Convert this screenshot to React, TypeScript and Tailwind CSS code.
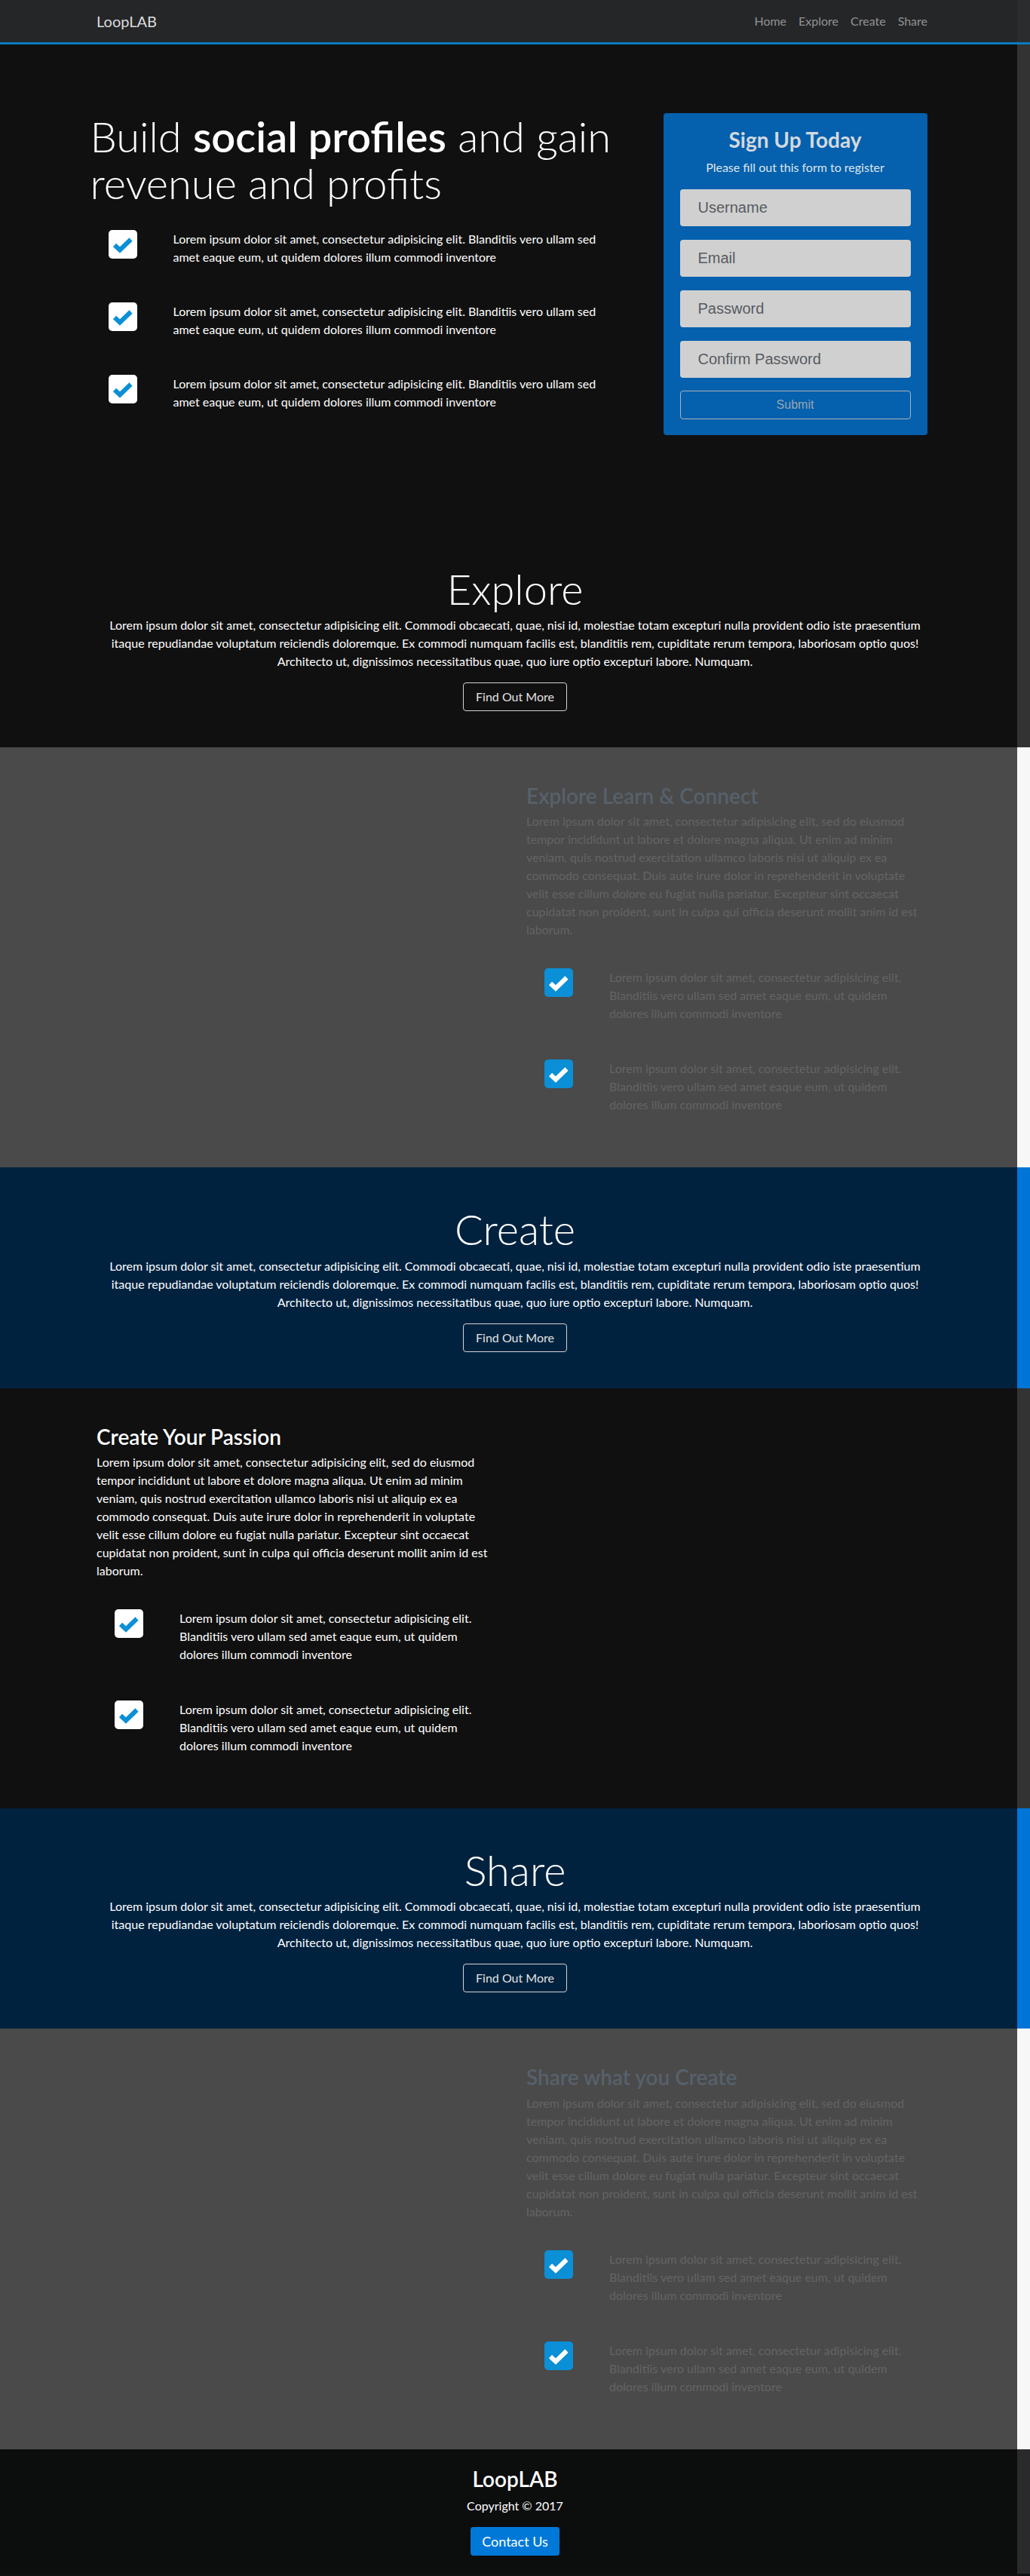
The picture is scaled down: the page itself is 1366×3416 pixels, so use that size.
import React from 'react';

const lorem =
  'Lorem ipsum dolor sit amet, consectetur adipisicing elit, sed do eiusmod tempor incididunt ut labore et dolore magna aliqua. Ut enim ad minim veniam, quis nostrud exercitation ullamco laboris nisi ut aliquip ex ea commodo consequat. Duis aute irure dolor in reprehenderit in voluptate velit esse cillum dolore eu fugiat nulla pariatur. Excepteur sint occaecat cupidatat non proident, sunt in culpa qui officia deserunt mollit anim id est laborum.';

const shortLorem =
  'Lorem ipsum dolor sit amet, consectetur adipisicing elit. Blanditiis vero ullam sed amet eaque eum, ut quidem dolores illum commodi inventore';

const CheckBox = ({ inverted = false }: { inverted?: boolean }) => (
  <svg width="38" height="38" viewBox="0 0 38 38" className="shrink-0">
    <rect width="38" height="38" rx="5" fill={inverted ? '#0b8fd6' : '#ffffff'} />
    <path
      d="M8 20 L15 26.5 L29.5 12.5"
      fill="none"
      stroke={inverted ? '#ffffff' : '#0b8fd6'}
      strokeWidth="6"
    />
  </svg>
);

const Banner = ({ title, className }: { title: string; className: string }) => (
  <section className={className}>
    <div className="ml-[113px] w-[1140px] px-[15px] pt-12 pb-12 text-center">
      <h1 className="text-[56px] font-light leading-[1.2] text-white mb-[3px]">{title}</h1>
      <p className="text-base leading-6 text-white">
        Lorem ipsum dolor sit amet, consectetur adipisicing elit. Commodi obcaecati, quae, nisi id, molestiae totam excepturi nulla provident odio iste praesentium
        <br />
        itaque repudiandae voluptatum reiciendis doloremque. Ex commodi numquam facilis est, blanditiis rem, cupiditate rerum tempora, laboriosam optio quos!
        <br />
        Architecto ut, dignissimos necessitatibus quae, quo iure optio excepturi labore. Numquam.
      </p>
      <button className="mt-4 h-[38px] px-4 rounded border border-[#d4d4d4] text-[#e2e2e2] text-base">
        Find Out More
      </button>
    </div>
  </section>
);

const Feature = ({
  title,
  right = false,
  className,
}: {
  title: string;
  right?: boolean;
  className: string;
}) => (
  <section className={className}>
    <div className="ml-[113px] w-[1140px] px-[15px] pt-[48px] pb-[71px]">
      <div className={right ? 'ml-[570px] w-[532px]' : 'w-[532px]'}>
        <h3
          className={
            right
              ? 'text-[28px] font-semibold leading-[1.2] mb-[5px] text-[#57616b]'
              : 'text-[28px] font-semibold leading-[1.2] mb-[5px] text-white'
          }
        >
          {title}
        </h3>
        <p className={right ? 'text-base leading-6 text-[#646464]' : 'text-base leading-6 text-white'}>{lorem}</p>
        <div className="mt-[39px] flex flex-col gap-[49px]">
          {[0, 1].map(i => (
            <div key={i} className="flex items-start">
              <div className="w-[110px] pl-6">
                <CheckBox inverted={right} />
              </div>
              <p className={right ? 'w-[420px] text-base leading-6 text-[#646464]' : 'w-[420px] text-base leading-6 text-white'}>
                {shortLorem}
              </p>
            </div>
          ))}
        </div>
      </div>
    </div>
  </section>
);

const App: React.FC = () => {
  return (
    <div className="min-h-screen bg-[#101010] font-['Lato','Open_Sans',sans-serif] antialiased">
      {/* Navbar */}
      <nav className="h-14 bg-[#252628] border-r-[17px] border-r-[#2b2c2e]">
        <div className="ml-[113px] w-[1140px] px-[15px] h-full flex items-center justify-between">
          <a className="text-xl text-[#dcdcdc]">LoopLAB</a>
          <ul className="flex text-base text-[#929393]">
            {['Home', 'Explore', 'Create', 'Share'].map(item => (
              <li key={item} className="px-2">{item}</li>
            ))}
          </ul>
        </div>
      </nav>
      <div className="h-[3px] bg-[#0a7bc0]" />

      {/* Hero */}
      <section className="bg-[#101010] border-r-[17px] border-r-[#333333]">
        <div className="mx-auto w-[1140px] px-[15px] pt-[91px] pb-[122px] flex items-start gap-[30px]">
          <div className="w-[730px]">
            <h1 className="text-[56px] font-light leading-[62px] text-white">
              Build <strong className="font-semibold">social profiles</strong> and gain revenue and profits
            </h1>
            <div className="mt-[31px] flex flex-col gap-12">
              {[0, 1, 2].map(i => (
                <div key={i} className="flex items-start">
                  <div className="w-[110px] pl-6">
                    <CheckBox />
                  </div>
                  <p className="w-[585px] text-base leading-6 text-white">{shortLorem}</p>
                </div>
              ))}
            </div>
          </div>

          <div className="w-[350px] bg-[#0560ad] rounded px-[22px] pt-[19px] pb-[21px] text-center">
            <h2 className="text-[28px] font-bold leading-[1.2] text-[#d3d9df]">Sign Up Today</h2>
            <p className="mt-[7px] text-base leading-6 text-[#dfe5ea]">Please fill out this form to register</p>
            <form className="mt-[17px] flex flex-col gap-[18px] font-['Liberation_Sans',Arial,sans-serif]">
              {['Username', 'Email', 'Password', 'Confirm Password'].map(ph => (
                <input
                  key={ph}
                  placeholder={ph}
                  className="h-[49px] w-full rounded bg-[#d0d0d0] px-6 text-xl text-[#333] placeholder:text-[#575b60] outline-none"
                />
              ))}
              <button
                type="button"
                className="mt-[-1px] h-[38px] w-full rounded border border-[#a9b3bd] text-base text-[#9ba6b1]"
              >
                Submit
              </button>
            </form>
          </div>
        </div>
      </section>

      <Banner title="Explore" className="bg-[#101010] border-r-[17px] border-r-[#333333]" />

      <Feature title="Explore Learn & Connect" right className="bg-[#4a4a4a] border-r-[17px] border-r-[#f7f7f7]" />

      <Banner title="Create" className="bg-[#00223f] border-r-[17px] border-r-[#0075d8]" />

      <Feature title="Create Your Passion" className="bg-[#101010] border-r-[17px] border-r-[#333333]" />

      <Banner title="Share" className="bg-[#00223f] border-r-[17px] border-r-[#0075d8]" />

      <Feature title="Share what you Create" right className="bg-[#4a4a4a] border-r-[17px] border-r-[#f7f7f7]" />

      {/* Footer */}
      <footer className="bg-[#0c0d0d] border-r-[17px] border-r-[#2a2a2c]">
        <div className="ml-[113px] w-[1140px] pt-[23px] pb-6 text-center">
          <h3 className="text-[28px] font-semibold leading-[1.2] text-white">LoopLAB</h3>
          <p className="mt-1.5 text-base leading-6 text-white">Copyright &copy; 2017</p>
          <button className="mt-4 h-[38px] px-[15px] rounded bg-[#0078d7] text-lg text-white">Contact Us</button>
        </div>
      </footer>
    </div>
  );
};

export default App;
